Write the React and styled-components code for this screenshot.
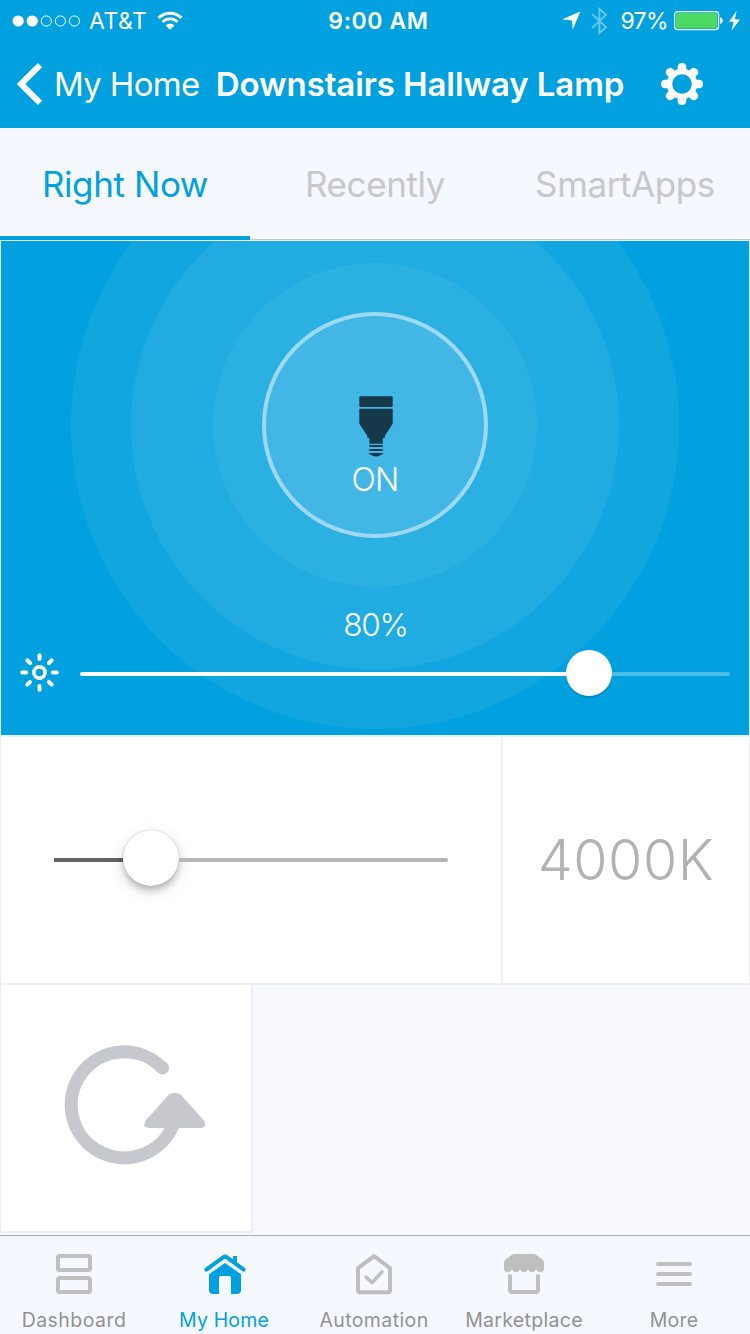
import React from "react";
import styled, { createGlobalStyle } from "styled-components";

const blue = "#01a0de";
const paleBg = "#f5f8ff";
const line = "#ebeef2";

const GlobalStyle = createGlobalStyle`
  * { box-sizing: border-box; }
  body {
    margin: 0;
    background: ${paleBg};
    font-family: Inter, "Liberation Sans", sans-serif;
  }
  svg { display: block; flex: none; }
`;

const Screen = styled.div`
  width: 750px;
  height: 1334px;
  display: flex;
  flex-direction: column;
  overflow: hidden;
  background: #f7f9ff;
`;

/* Status bar */

const StatusBar = styled.div`
  height: 41px;
  flex: none;
  display: flex;
  align-items: center;
  background: ${blue};
  color: #fff;
  font-size: 23px;
  line-height: 28px;
`;

const StatusSide = styled.div`
  flex: 1;
  display: flex;
  align-items: center;
  justify-content: ${(p) => (p.$end ? "flex-end" : "flex-start")};
  padding: ${(p) => (p.$end ? "0 10px 0 0" : "0 0 0 12px")};
`;

const Carrier = styled.span`
  margin: 0 10px 0 9px;
  letter-spacing: 0.5px;
`;

const Clock = styled.time`
  font-weight: 600;
  letter-spacing: 0.6px;
  padding-left: 5px;
`;

const Percent = styled.span`
  margin: 0 6px 0 12px;
  letter-spacing: -0.6px;
`;

/* Navigation bar */

const NavBar = styled.header`
  height: 87px;
  flex: none;
  display: flex;
  align-items: center;
  padding: 0 47px 2px 16px;
  background: ${blue};
  color: #fff;
  font-size: 33px;
  line-height: 40px;
  white-space: nowrap;
`;

const BackButton = styled.a`
  display: flex;
  align-items: center;
  gap: 10px;
  font-weight: 400;
  letter-spacing: -0.65px;
`;

const Title = styled.h1`
  margin: 0 0 0 16px;
  flex: 1;
  font-size: inherit;
  font-weight: 600;
  letter-spacing: -0.1px;
`;

/* Section tabs */

const Tabs = styled.nav`
  height: 112px;
  flex: none;
  display: grid;
  grid-template-columns: repeat(3, 1fr);
  background: ${paleBg};
  box-shadow: inset 0 -1px #c7c7cc;
`;

const Tab = styled.a`
  display: flex;
  align-items: center;
  justify-content: center;
  padding-top: ${(p) => (p.$active ? 4 : 0)}px;
  border-bottom: ${(p) => (p.$active ? `4px solid ${blue}` : "0")};
  color: ${(p) => (p.$active ? blue : "#c7c7cc")};
  font-size: 35px;
  line-height: 42px;
  letter-spacing: -0.4px;
`;

/* Light control */

const Hero = styled.section`
  height: 494px;
  flex: none;
  margin: 1px 1px 0;
  display: flex;
  flex-direction: column;
  align-items: center;
  box-shadow: 0 0 0 1px #eceef2;
  color: #fff;
  background: radial-gradient(
    circle at 374px 184px,
    #2bb0e2 161.5px,
    #20abe1 162.5px,
    #20abe1 243.5px,
    #11a6df 244.5px,
    #11a6df 303.5px,
    ${blue} 304.5px
  );
`;

const PowerButton = styled.button`
  width: 226px;
  height: 226px;
  flex: none;
  margin: 71px 0 0;
  padding: 80px 0 0 1px;
  display: flex;
  flex-direction: column;
  align-items: center;
  border: 4px solid #9ddaf2;
  border-radius: 50%;
  background: #42b7e6;
  color: #fff;
  font: 300 32px/38px Inter, sans-serif;
  letter-spacing: -0.9px;
`;

const PowerLabel = styled.span`
  margin: 4px 1px 0 0;
`;

const Level = styled.div`
  height: 38px;
  margin-top: 68px;
  padding-left: 1px;
  font-size: 31.5px;
  font-weight: 300;
  line-height: 38px;
  letter-spacing: -1.2px;
`;

const SliderRow = styled.div`
  align-self: stretch;
  display: flex;
  align-items: center;
  gap: 20px;
  margin-top: 6px;
  padding: 0 19px 0 18px;
`;

const Track = styled.div`
  flex: 1;
  display: flex;
  align-items: center;
  height: ${(p) => p.$thumb}px;
`;

const Segment = styled.div`
  width: ${(p) => (p.$width ? `${p.$width}px` : "auto")};
  flex: ${(p) => (p.$width ? "none" : 1)};
  height: 4px;
  margin-top: ${(p) => p.$drop}px;
  background: ${(p) => p.$color};
  border-radius: ${(p) => p.$radius || "0"};
`;

const Thumb = styled.div`
  width: ${(p) => p.$size}px;
  height: ${(p) => p.$size}px;
  flex: none;
  border-radius: 50%;
  background: #fff;
  box-shadow: ${(p) => p.$shadow};
`;

/* Tiles */

const Tiles = styled.section`
  flex: 1;
  display: grid;
  grid-template-columns: 253px 250px 247px;
  grid-template-rows: 249px 248px;
  align-content: start;
  border-top: 1px solid ${line};
`;

const Tile = styled.div`
  grid-column: span ${(p) => p.$span || 1};
  display: flex;
  align-items: center;
  justify-content: center;
  background: #fff;
  border: solid ${line};
  border-width: ${(p) => p.$borders};
  padding: ${(p) => p.$pad || "0"};
`;

const Temperature = styled.span`
  color: #b2b2b2;
  font-size: 55.5px;
  font-weight: 300;
  line-height: 66px;
  letter-spacing: 0.6px;
`;

/* Bottom bar */

const BottomBar = styled.nav`
  height: 99px;
  flex: none;
  display: flex;
  border-top: 1px solid #a9abb1;
  background: ${paleBg};
`;

const BottomItem = styled.a`
  width: 150px;
  flex: none;
  display: flex;
  flex-direction: column;
  align-items: center;
  padding-top: 16px;
  color: ${(p) => (p.$active ? blue : "#929292")};
  font-size: 19.5px;
  line-height: 24px;
  letter-spacing: ${(p) => p.$tracking}px;
  &:first-child { margin-left: -1px; }
  svg {
    margin-bottom: 12px;
    color: ${(p) => (p.$active ? blue : "#bfbfbf")};
  }
`;

/* Icons */

const spokes = [0, 45, 90, 135, 180, 225, 270, 315];

const SignalDots = () => (
  <svg width="68" height="12" viewBox="0 0 68 12">
    {[0, 1, 2, 3, 4].map((i) => (
      <circle
        key={i}
        cx={6.2 + i * 14.05}
        cy="6"
        r={i < 2 ? 5.6 : 5.1}
        fill={i < 2 ? "#fff" : "none"}
        stroke={i < 2 ? "none" : "#fff"}
        strokeWidth="1"
      />
    ))}
  </svg>
);

const Wifi = () => (
  <svg width="26" height="20" viewBox="0 0 26 20" fill="none" stroke="#fff">
    <path d="M1.6 6.9a16.2 16.2 0 0 1 22.8 0" strokeWidth="3" />
    <path d="M5.5 11a10.7 10.7 0 0 1 15 0" strokeWidth="2.8" />
    <path d="M8.6 14.4a6.2 6.2 0 0 1 8.8 0L13 18.8z" fill="#fff" stroke="none" />
  </svg>
);

const LocationArrow = () => (
  <svg width="29" height="19" viewBox="0 0 29 19" fill="#fff">
    <path d="M18.3.4 10.8 18.4 9.9 9.6.4 8.2z" />
  </svg>
);

const Bluetooth = () => (
  <svg width="17" height="28" viewBox="0 0 17 28" fill="none" stroke="#67c6ec" strokeWidth="2">
    <path d="M1 6.9 15 20.3 8.4 26V2L15 7.8 1 21.1" />
  </svg>
);

const Battery = () => (
  <svg width="66" height="22" viewBox="0 0 66 22">
    <rect x="0.6" y="1.6" width="44" height="18" rx="3" fill="none" stroke="#fff" strokeWidth="1.2" />
    <rect x="2" y="3" width="41.3" height="15.2" rx="1.6" fill="#4cd964" />
    <path d="M46.2 7.3c3.4 1 3.4 5.6 0 6.6z" fill="#fff" />
    <path d="M62.6.8 55.2 11.7h4.4l-2 8.8L66 9.4h-5.2z" fill="#fff" />
  </svg>
);

const BackChevron = () => (
  <svg width="28" height="42" viewBox="0 0 28 42" fill="none" stroke="#fff" strokeWidth="6">
    <path d="M24 2.2 5 21l19 18.8" />
  </svg>
);

const Gear = () => (
  <svg width="42" height="42" viewBox="-21 -21 42 42" fill="none" stroke="#fff">
    <circle r="12.5" strokeWidth="5.4" />
    {spokes.map((a) => (
      <path
        key={a}
        d="M-4.3-13V-17Q-4.1-21 0-21T4.3-17V-13z"
        transform={`rotate(${a})`}
        fill="#fff"
        stroke="none"
      />
    ))}
  </svg>
);

const FloodBulb = () => (
  <svg width="34" height="61" viewBox="0 0 34 61" fill="#15394a">
    <rect x="0.3" y="0.3" width="33.4" height="10.7" rx="1" />
    <path d="M.3 12.7h33.4v15L25.8 40v2h-2v5.7H10.4V42h-2v-2L.3 27.7z" />
    <path d="M10.3 49h13.4v2H10.3zM10.3 53h13.4v2H10.3zM10.3 57h13.4v1.3c-1.5.3-2.2.9-3.2 1.5-2.3.9-4.6.9-7 0-1-.6-1.7-1.2-3.2-1.5z" />
  </svg>
);

const Sun = () => (
  <svg width="41" height="40" viewBox="-20.5 -19.5 41 40" fill="none" stroke="#fff" strokeWidth="4">
    <circle r="5.6" strokeWidth="3.6" />
    {spokes.map((a) => (
      <path key={a} d="M0-13.4V-17.2" transform={`rotate(${a})`} strokeLinecap="round" />
    ))}
  </svg>
);

const Refresh = () => (
  <svg width="142" height="120" viewBox="0 0 142 120" fill="none" stroke="#c7c8cd">
    <path d="M98.4 23.1A53 53 0 1 0 110.3 77" strokeWidth="13" />
    <circle cx="98.7" cy="22.9" r="6.5" fill="#c7c8cd" stroke="none" />
    <path
      d="M105 49.5Q110.800 46.700 116.600 49.500L140.200 75.800Q143.300 82.900 136.300 82.900H84.300Q78.200 82.900 81.400 75.800z"
      fill="#c7c8cd"
      stroke="none"
    />
  </svg>
);

const DashboardIcon = () => (
  <svg width="44" height="44" viewBox="0 0 44 44" fill="none" stroke="currentColor" strokeWidth="4">
    <rect x="6" y="4" width="32" height="14" rx="1.5" />
    <rect x="6" y="26" width="32" height="14" rx="1.5" />
  </svg>
);

const HomeIcon = () => (
  <svg width="44" height="44" viewBox="0 0 44 44" fill="currentColor">
    <path
      d="M4.3 17.6 21.1 5.4Q23 3.900 24.900 5.400L41.700 17.600"
      fill="none"
      stroke="currentColor"
      strokeWidth="4"
      strokeLinecap="round"
    />
    <path d="M31 4h4v9l-4-3z" />
    <path d="M23 11 39 22.2V38a4 4 0 0 1-4 4H29V26a2 2 0 0 0-2-2h-8a2 2 0 0 0-2 2v16H11a4 4 0 0 1-4-4V22.200z" />
  </svg>
);

const AutomationIcon = () => (
  <svg width="44" height="44" viewBox="0 0 44 44" fill="none" stroke="currentColor" strokeWidth="4" strokeLinejoin="round">
    <path d="M22 4.2 38 16.2V38.5a1.7 1.7 0 0 1-1.7 1.7H7.7A1.7 1.7 0 0 1 6 38.5V16.2z" />
    <path d="m14.3 25.2 5.8 5.5 9.9-10.9" strokeWidth="3.6" strokeLinecap="round" />
  </svg>
);

const MarketIcon = () => (
  <svg width="44" height="44" viewBox="0 0 44 44" fill="currentColor">
    <path d="M12.5 2h19q1.5 0 2.8 1L40.5 7.5Q42 8.6 42 10.5V16.5a3.8 3.6 0 0 1-7.2 1.8q-.8-1.5-1.6 0a3.6 3.6 0 0 1-6.4 0q-.8-1.5-1.6 0a3.6 3.6 0 0 1-6.4 0q-.8-1.5-1.6 0a3.6 3.6 0 0 1-6.4 0q-.8-1.5-1.6 0A3.8 3.6 0 0 1 2 16.5V10.5Q2 8.6 3.5 7.5L9.7 3Q11 2 12.5 2z" />
    <path d="M8 24V38a2 2 0 0 0 2 2H34a2 2 0 0 0 2-2V24" fill="none" stroke="currentColor" strokeWidth="4" strokeLinecap="round" />
  </svg>
);

const MoreIcon = () => (
  <svg width="44" height="44" viewBox="0 0 44 44" stroke="currentColor" strokeWidth="4" strokeLinecap="round">
    <path d="M6 12H38M6 22H38M6 32H38" />
  </svg>
);

const bottomItems = [
  { label: "Dashboard", Icon: DashboardIcon, tracking: 0.45 },
  { label: "My Home", Icon: HomeIcon, tracking: 0.15, active: true },
  { label: "Automation", Icon: AutomationIcon, tracking: 0.4 },
  { label: "Marketplace", Icon: MarketIcon, tracking: 0.3 },
  { label: "More", Icon: MoreIcon, tracking: 0.2 },
];

export default function App() {
  return (
    <>
      <GlobalStyle />
      <Screen>
        <StatusBar>
          <StatusSide>
            <SignalDots />
            <Carrier>AT&amp;T</Carrier>
            <Wifi />
          </StatusSide>
          <Clock>9:00 AM</Clock>
          <StatusSide $end>
            <LocationArrow />
            <Bluetooth />
            <Percent>97%</Percent>
            <Battery />
          </StatusSide>
        </StatusBar>
        <NavBar>
          <BackButton>
            <BackChevron />
            My Home
          </BackButton>
          <Title>Downstairs Hallway Lamp</Title>
          <Gear />
        </NavBar>
        <Tabs>
          <Tab $active>Right Now</Tab>
          <Tab>Recently</Tab>
          <Tab>SmartApps</Tab>
        </Tabs>
        <Hero>
          <PowerButton>
            <FloodBulb />
            <PowerLabel>ON</PowerLabel>
          </PowerButton>
          <Level>80%</Level>
          <SliderRow>
            <Sun />
            <Track $thumb={46}>
              <Segment $width={486} $drop={2} $color="#fff" $radius="2px 0 0 2px" />
              <Thumb $size={46} $shadow="0 2px 1px rgba(0, 60, 100, 0.2)" />
              <Segment $drop={2} $color="#4dbde8" $radius="0 2px 2px 0" />
            </Track>
          </SliderRow>
        </Hero>
        <Tiles>
          <Tile $span={2} $borders="1px 2px 2px 1px" $pad="0 53px 5px">
            <Track $thumb={56}>
              <Segment $width={69} $drop={4} $color="#636366" />
              <Thumb
                $size={56}
                $shadow="0 0 1px rgba(0,0,0,.35), 0 5px 6px rgba(0,0,0,.2), 0 5px 18px rgba(0,0,0,.11)"
              />
              <Segment $drop={4} $color="#b6b6b6" $radius="0 2px 2px 0" />
            </Track>
          </Tile>
          <Tile $borders="1px 1px 2px 0">
            <Temperature>4000K</Temperature>
          </Tile>
          <Tile $borders="0 2px 2px 1px" $pad="0 0 7px 18px">
            <Refresh />
          </Tile>
        </Tiles>
        <BottomBar>
          {bottomItems.map(({ label, Icon, active, tracking }) => (
            <BottomItem key={label} $active={active} $tracking={tracking}>
              <Icon />
              {label}
            </BottomItem>
          ))}
        </BottomBar>
      </Screen>
    </>
  );
}
